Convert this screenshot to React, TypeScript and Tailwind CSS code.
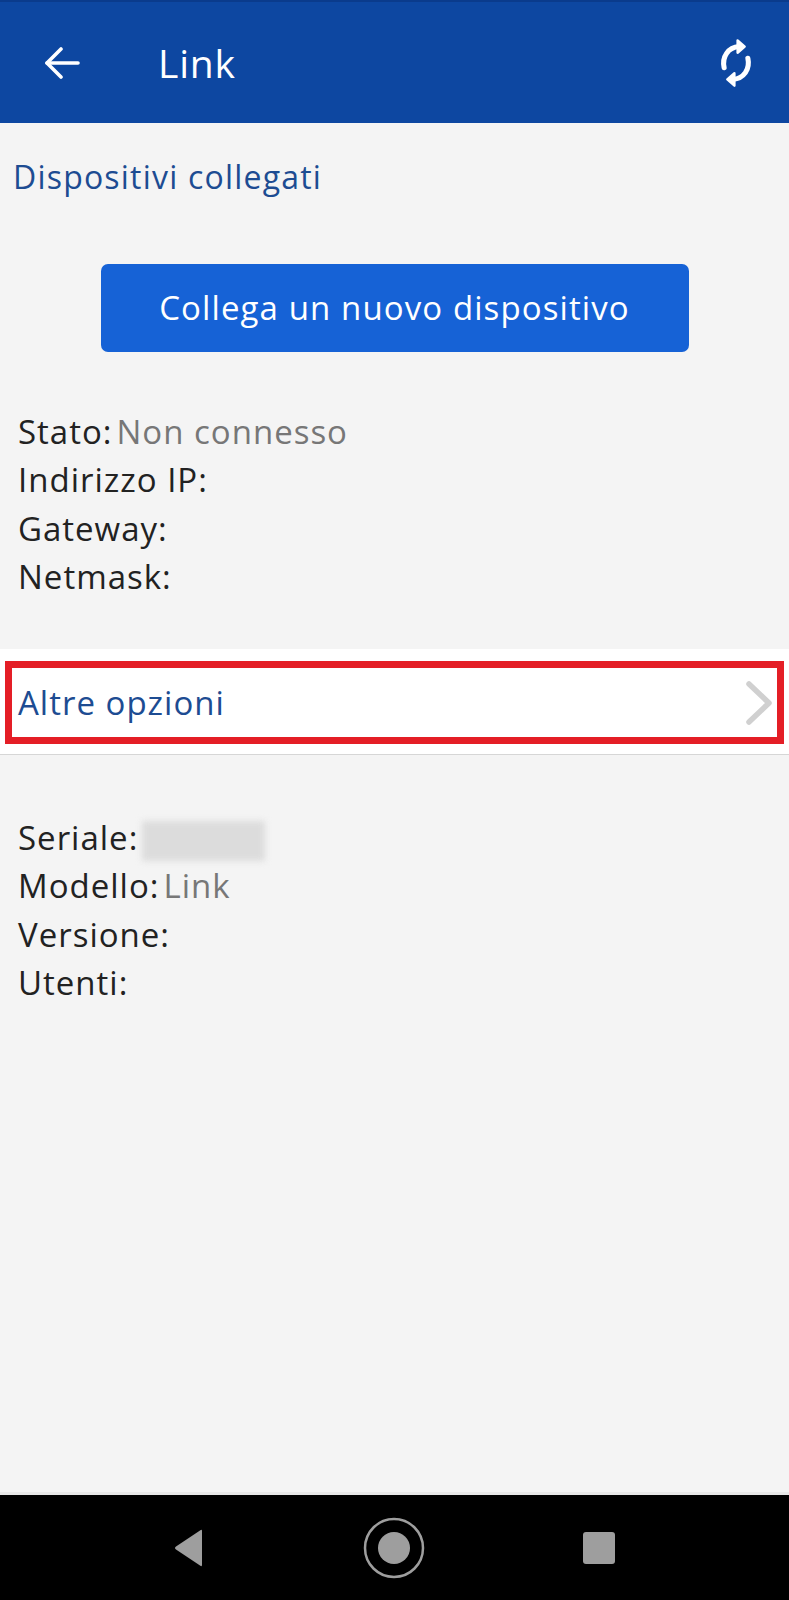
import React from "react";

const font = { fontFamily: "'Open Sans', 'Noto Sans', 'Liberation Sans', sans-serif" };

function Row({ label, value }: { label: string; value?: React.ReactNode }) {
  return (
    <div className="h-[48.5px] flex items-center text-[33px] tracking-[1px] text-[#222222]">
      <span>{label}</span>
      {value !== undefined && <span className="ml-[4px] text-[#777777]">{value}</span>}
    </div>
  );
}

export default function App() {
  return (
    <div className="w-[789px] h-[1600px] flex flex-col bg-[#f4f4f4]" style={font}>
      {/* Header */}
      <div className="h-[123px] bg-[#0d47a1] border-t-2 border-[#0a3b8c] flex items-center shrink-0">
        <div className="w-[158px] flex items-center pl-[44px]">
          <svg width="36" height="32" viewBox="0 0 36 32" fill="none" stroke="white" strokeWidth="3.6" strokeLinecap="round" strokeLinejoin="round">
            <path d="M34 16H3" />
            <path d="M17 2L3 16l14 14" />
          </svg>
        </div>
        <div className="flex-1 text-white text-[39px] tracking-[0.8px] leading-none">Link</div>
        <div className="pr-[34px] flex items-center">
          <svg width="38" height="50" viewBox="0 0 24 32" fill="none" stroke="white" strokeWidth="3.2" strokeLinecap="round" preserveAspectRatio="none">
            <path d="M4.5 19 C3 12 7 6 14 5.5" />
            <path d="M19.5 13 C21 20 17 26 10 26.5" />
            <path d="M13 1.5 L17.5 5.5 L13 9.5 Z" fill="white" stroke="white" strokeWidth="1.5" strokeLinejoin="round" />
            <path d="M11 22.5 L6.5 26.5 L11 30.5 Z" fill="white" stroke="white" strokeWidth="1.5" strokeLinejoin="round" />
          </svg>
        </div>
      </div>

      {/* Section title */}
      <div className="mt-[34px] px-[13px] h-[40px] flex items-center text-[32px] tracking-[1.2px] text-[#1d4c92]">
        Dispositivi collegati
      </div>

      {/* Button */}
      <div className="mt-[67px] flex justify-center">
        <button className="w-[588px] h-[88px] rounded-[7px] bg-[#1662d6] text-white text-[33px] tracking-[1.1px] flex items-center justify-center">
          Collega un nuovo dispositivo
        </button>
      </div>

      {/* Network info */}
      <div className="mt-[55px] px-[18px]">
        <Row label="Stato:" value="Non connesso" />
        <Row label="Indirizzo IP:" />
        <Row label="Gateway:" />
        <Row label="Netmask:" />
      </div>

      {/* Altre opzioni band */}
      <div className="mt-[48px] bg-white border-b border-[#d6d6d6] pt-[12px] pb-[10px] px-[5px]">
        <div className="h-[83px] border-[7px] border-[#e41e26] flex items-center justify-between pl-[6px] pr-[4px]">
          <span className="text-[33px] tracking-[1px] text-[#1d4c92]">Altre opzioni</span>
          <svg width="28" height="44" viewBox="0 0 28 44" fill="none" stroke="#d0d0d0" strokeWidth="5.5" strokeLinecap="round" strokeLinejoin="round">
            <path d="M4 3 L24 22 L4 41" />
          </svg>
        </div>
      </div>

      {/* Device info */}
      <div className="mt-[58px] px-[18px]">
        <Row
          label="Seriale:"
          value={<span className="inline-block align-middle w-[123px] h-[40px] bg-[#dcdcdc] blur-[3px]"></span>}
        />
        <Row label="Modello:" value="Link" />
        <Row label="Versione:" />
        <Row label="Utenti:" />
      </div>

      <div className="flex-1" />

      {/* Nav bar */}
      <div className="h-[108px] bg-black border-t-[3px] border-[#e8e8e8] flex items-center justify-center shrink-0">
        <div className="flex items-center">
          <svg width="34" height="38" viewBox="0 0 34 38" className="mr-[157px] ml-[-2px]">
            <path d="M30 2 L30 36 Q30 38 28 36.5 L4 20.5 Q2 19 4 17.5 L28 1.5 Q30 0 30 2 Z" fill="#9e9e9e" />
          </svg>
          <svg width="62" height="62" viewBox="0 0 62 62" className="mr-[158px]">
            <circle cx="31" cy="31" r="29" fill="none" stroke="#9e9e9e" strokeWidth="2.5" />
            <circle cx="31" cy="31" r="16" fill="#9e9e9e" />
          </svg>
          <div className="w-[32px] h-[32px] rounded-[3px] bg-[#9e9e9e]" />
        </div>
      </div>
    </div>
  );
}
